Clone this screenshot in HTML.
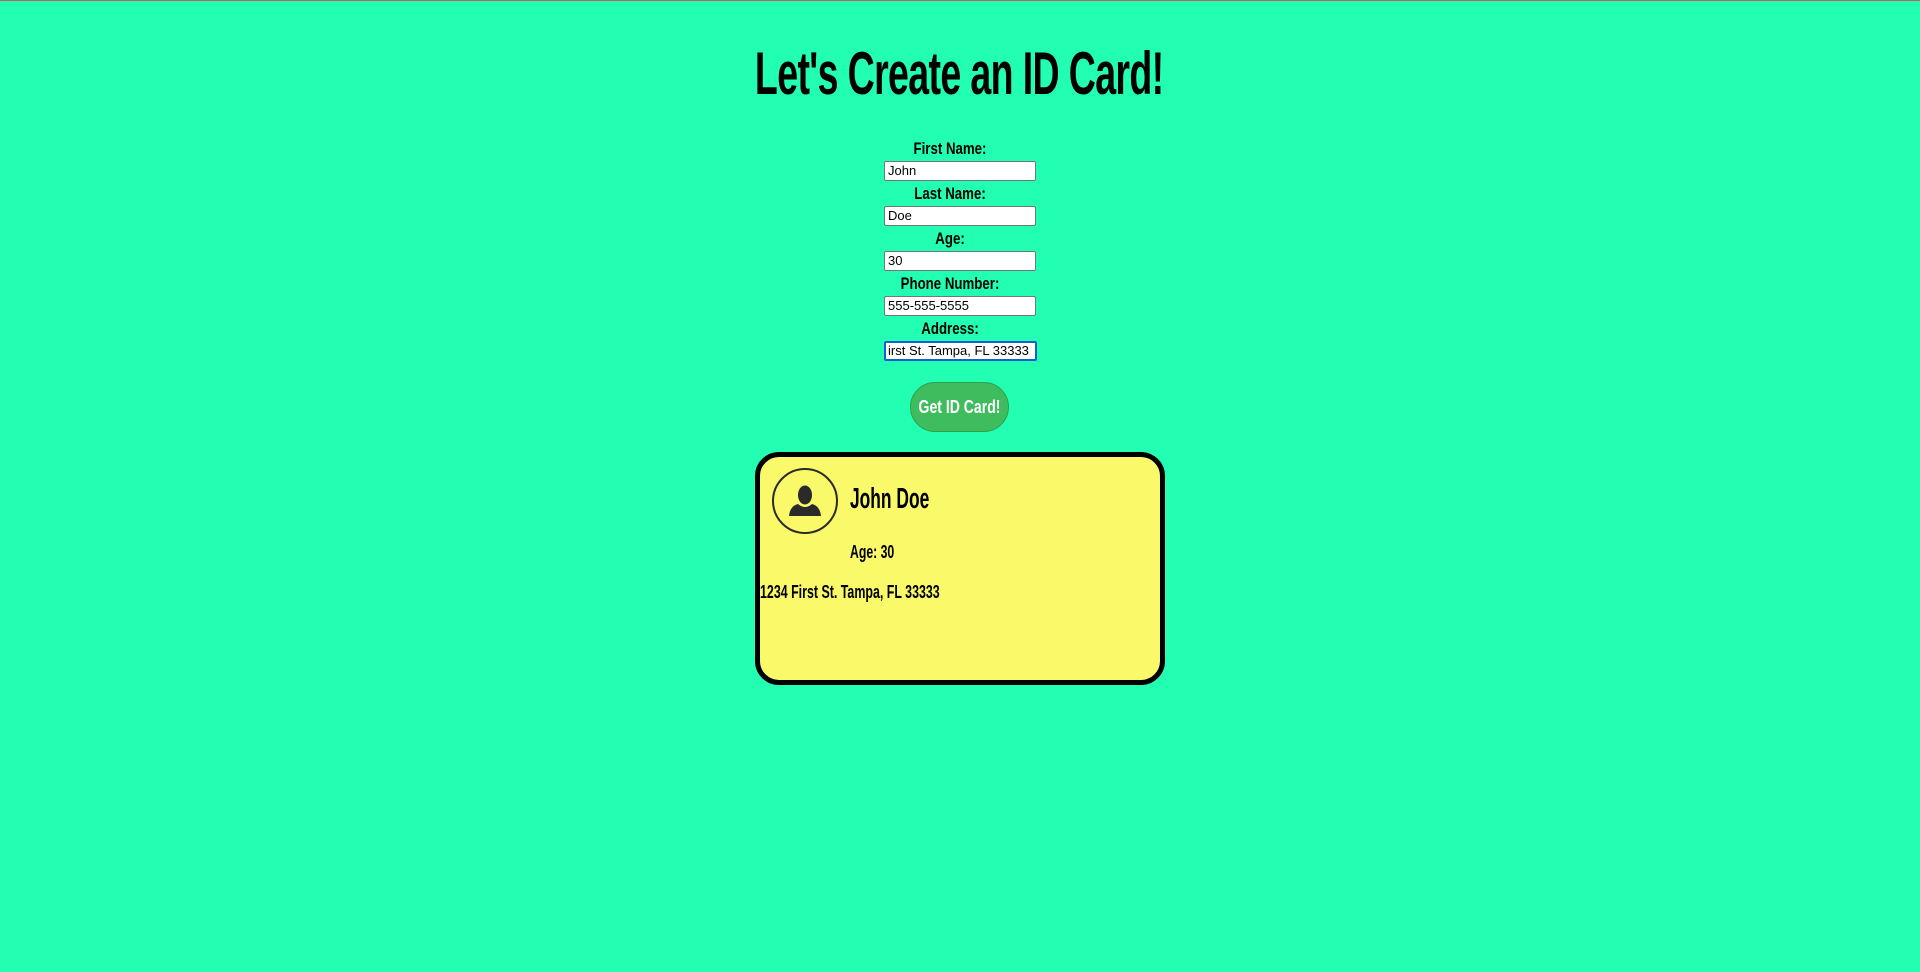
<!DOCTYPE html>
<html><head><meta charset="utf-8"><style>
html,body{margin:0;padding:0}
body{width:1920px;height:972px;background:#22ffb2;border-top:1px solid #c0605a;box-sizing:border-box;position:relative;overflow:hidden;font-family:"Liberation Sans Narrow","Liberation Sans",sans-serif;color:#000}
.c{position:absolute;white-space:nowrap}
h1{position:absolute;left:0;width:1920px;top:38px;margin:0;text-align:center;font-size:60px;font-weight:bold;transform:scaleX(0.625);transform-origin:958px 0;letter-spacing:-1px;white-space:nowrap}
.lab{position:absolute;left:0;width:1900px;text-align:center;font-size:17px;font-weight:bold;transform:scaleX(0.78);transform-origin:950px 0}
.in{position:absolute;left:884px;width:152px;height:20px;box-sizing:border-box;border:1px solid #767676;border-radius:2px;background:#fff;font-family:"Liberation Sans",sans-serif;font-size:13px;line-height:18px;padding-left:3px;overflow:hidden;white-space:nowrap}
.btn{position:absolute;left:910px;top:381px;width:99px;height:50px;box-sizing:border-box;border:1px solid #2ea04a;border-radius:25px;background:#3fbd5e}
.btn span{position:absolute;left:-50px;width:197px;top:0;text-align:center;color:#fff;font-size:18px;font-weight:bold;line-height:48px;white-space:nowrap;transform:scaleX(0.78)}
.card{position:absolute;left:755px;top:451px;width:410px;height:233px;box-sizing:border-box;border:5px solid #000;border-radius:24px;background:#f9f96a}
</style></head><body>
<h1>Let's Create an ID Card!</h1>
<div class="lab" style="top:138px">First Name:</div>
<div class="in" style="top:160px">John</div>
<div class="lab" style="top:183px">Last Name:</div>
<div class="in" style="top:205px">Doe</div>
<div class="lab" style="top:228px">Age:</div>
<div class="in" style="top:250px">30</div>
<div class="lab" style="top:273px">Phone Number:</div>
<div class="in" style="top:295px">555-555-5555</div>
<div class="lab" style="top:318px">Address:</div>
<div class="in" style="top:340px;border:2px solid #1a5fd0;padding-left:2px;line-height:16px;width:153px">irst St. Tampa, FL 33333</div>
<div class="btn"><span>Get ID Card!</span></div>
<div class="card"></div>
<svg class="c" style="left:770px;top:465px" width="70" height="70" viewBox="0 0 70 70">
<circle cx="35" cy="35" r="32" fill="none" stroke="#2a2a2a" stroke-width="2"/>
<ellipse cx="35" cy="29" rx="7" ry="9.5" fill="#2a2a2a"/>
<path d="M19 50 Q20 40 28 38 Q35 44 42 38 Q50 40 51 50 Z" fill="#2a2a2a"/>
</svg>
<div class="c" style="left:850px;top:482px;font-size:29px;transform:scaleX(0.6);transform-origin:0 0;font-weight:bold">John Doe</div>
<div class="c" style="left:850px;top:541px;font-size:18px;transform:scaleX(0.68);transform-origin:0 0;font-weight:bold">Age: 30</div>
<div class="c" style="left:760px;top:581px;font-size:18px;transform:scaleX(0.69);transform-origin:0 0;font-weight:bold">1234 First St. Tampa, FL 33333</div>
</body></html>
